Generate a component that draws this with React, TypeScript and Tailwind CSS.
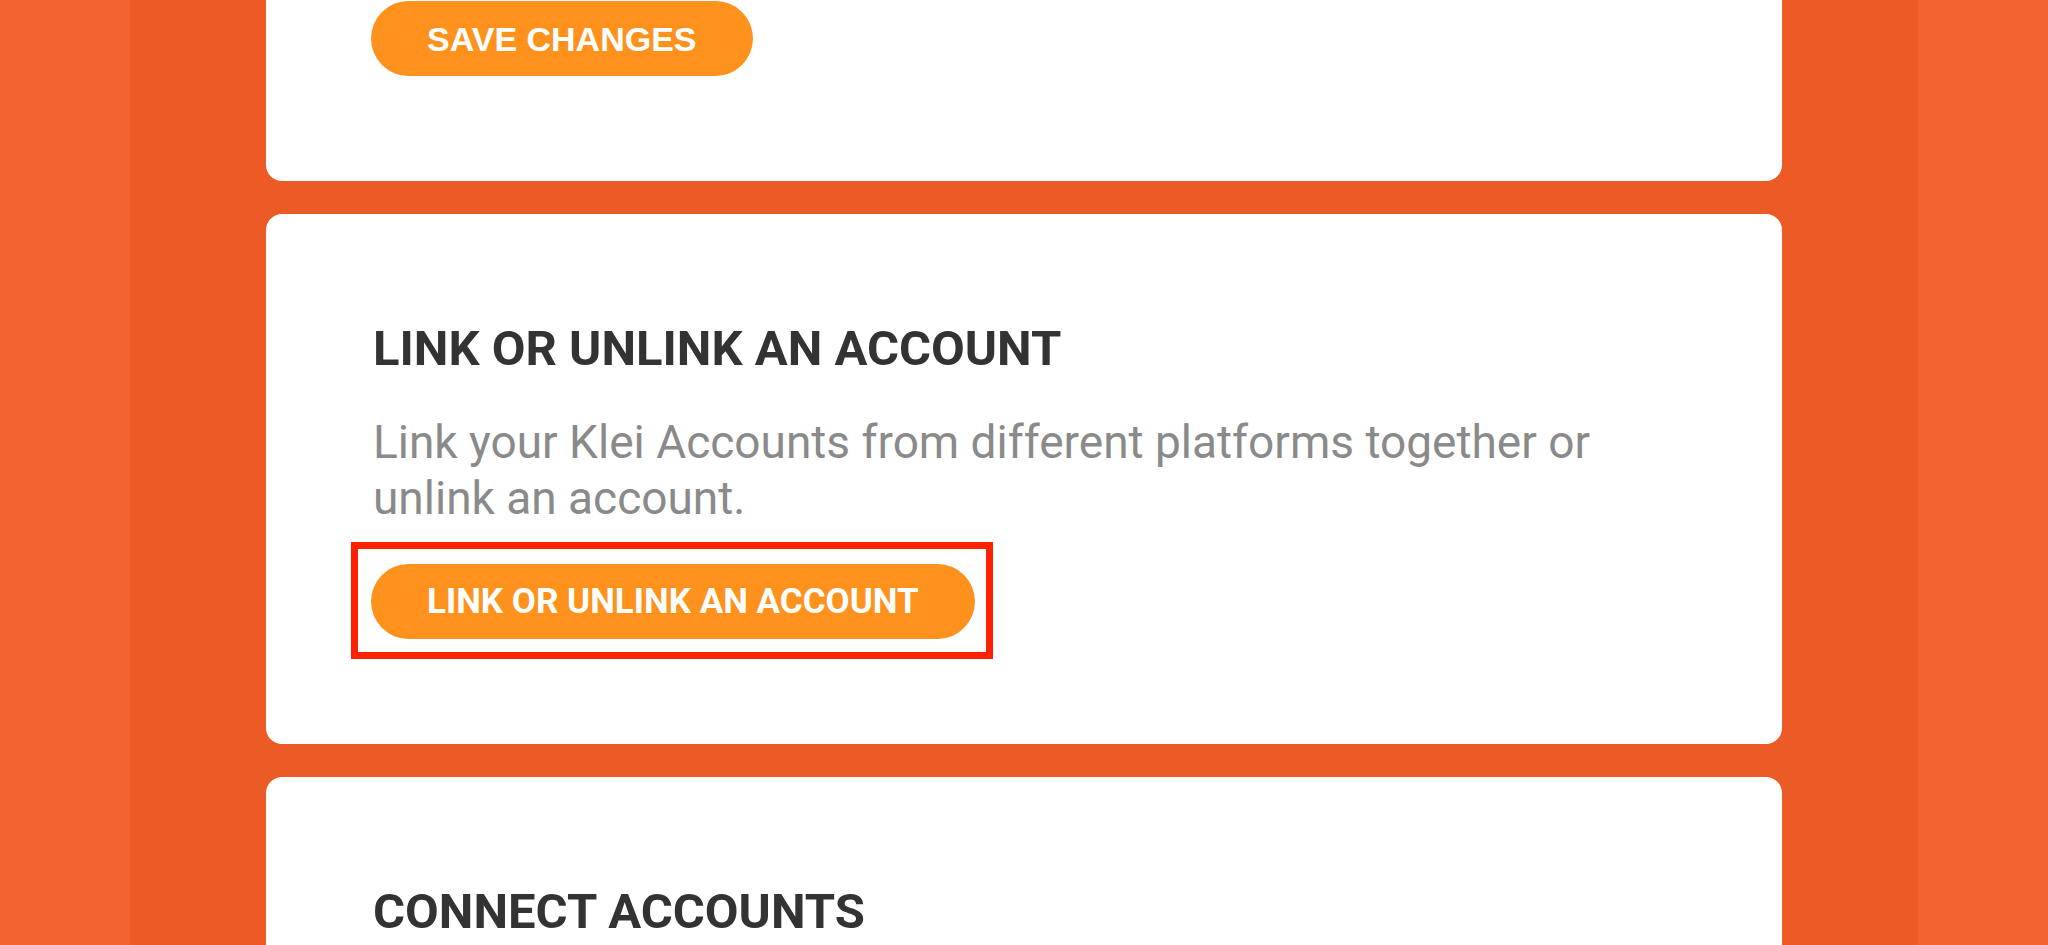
import React from "react";

export default function App() {
  return (
    <div
      className="flex h-[945px] w-full justify-center overflow-hidden bg-[#F0622F]"
      style={{ fontFamily: "Roboto, 'Noto Sans', sans-serif" }}
    >
      <div className="flex w-[1788px] flex-col items-center gap-[33px] bg-[#EC5A25] pt-0">
        {/* Card 1 (top cut off) */}
        <div className="-mt-[100px] w-[1516px] rounded-[16px] bg-white pb-[105px] pl-[105px] pt-[101px]">
          <button
            className="h-[75px] rounded-full bg-[#FE921C] px-[56px] text-[34px] font-bold uppercase leading-none text-white"
            style={{ fontFamily: "'Liberation Sans', Arial, sans-serif" }}
          >
            Save Changes
          </button>
        </div>

        {/* Card 2 */}
        <div className="w-[1516px] rounded-[16px] bg-white pb-[105px] pl-[105px] pr-[107px] pt-[106px]">
          <h2 className="pl-[2px] text-[49px] font-bold leading-[1.2] text-[#333333]">
            LINK OR UNLINK AN ACCOUNT
          </h2>
          <p className="mt-[35px] pl-[2px] text-[46px] leading-[56px] text-[#8A8A8A]">
            Link your Klei Accounts from different platforms together or unlink an account.
          </p>
          <div className="mt-[38px]">
            <div className="relative inline-block">
              <button className="h-[75px] rounded-full bg-[#FE921C] px-[56px] text-[35px] font-bold uppercase leading-none text-white">
                Link or Unlink an Account
              </button>
              <span className="pointer-events-none absolute -bottom-[20px] -left-[20px] -right-[18px] -top-[22px] border-[7px] border-[#FF2200]" />
            </div>
          </div>
        </div>

        {/* Card 3 */}
        <div className="w-[1516px] flex-1 rounded-t-[16px] bg-white pl-[105px] pt-[106px]">
          <h2 className="pl-[2px] text-[49px] font-bold leading-[1.2] text-[#333333]">
            CONNECT ACCOUNTS
          </h2>
        </div>
      </div>
    </div>
  );
}
